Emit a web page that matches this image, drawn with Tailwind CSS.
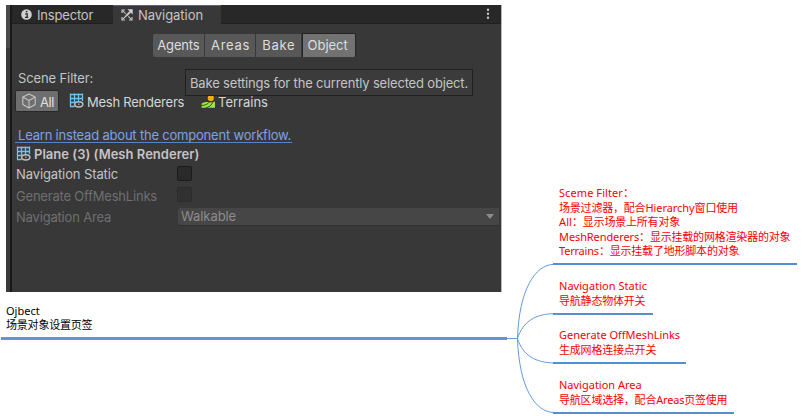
<!DOCTYPE html>
<html lang="zh-CN">
<head>
<meta charset="utf-8">
<title>Navigation – Object</title>
<script src="https://cdn.jsdelivr.net/npm/@tailwindcss/browser@4"></script>
</head>
<body class="bg-white">
<svg width="0" height="0" class="absolute">
  <defs>
    <symbol id="mesh" viewBox="0 0 15 15">
      <path d="M1.5 .5V13.5M5.5 .5V13.5M9.5 .5V8M13.5 .5V8M1 1.5H14M1 5.5H14M1 9.5H7M1 13.5H5.5" fill="none" stroke="#6cc4f0" stroke-width="1.3"/>
      <path d="M3.8 11.3Q9.6 4.6 15 11.3Q9.6 18 3.8 11.3Z" fill="#383838"/>
      <ellipse cx="9.8" cy="11.3" rx="4.1" ry="2.6" fill="none" stroke="#bdbdbd" stroke-width="1.5"/>
      <circle cx="9.8" cy="11.3" r="1" fill="#8a8a8a"/>
    </symbol>
  </defs>
</svg>
<main class="relative w-[803px] h-[418px] overflow-hidden">

  <!-- Root topic -->
  <section class="absolute left-[1px] top-[5px] w-[506px] h-[335px] border-b-[3px] border-[#5f96d9] pl-[5px]">
    <div class="relative w-[496px] h-[287px] flex bg-[#383838] border-r border-[#b8b8b8] font-['Inter',sans-serif] text-[13px] leading-[16px] tracking-[-0.18px] text-[#c4c4c4] whitespace-nowrap">
      <div class="w-[4px] bg-[#4a4a4a] border-b-[244px] border-[#3a3a3a]"></div>
      <div class="w-[2px] bg-[#191919]"></div>
      <div class="flex-1 min-w-0">
        <div class="h-[19px] flex bg-[#282828] border-b border-[#202020]">
          <div class="w-[101px] flex items-center pl-[9px] pt-[2px]">
            <svg class="w-[11px] h-[11px] mr-[5px] -mt-px" viewBox="0 0 11 11"><circle cx="5.5" cy="5.5" r="5.3" fill="#d0d0d0"/><path d="M4.2 4.8H6.2V8M4 8.3H7.3" fill="none" stroke="#282828" stroke-width="1.3"/><circle cx="5.6" cy="2.6" r=".9" fill="#282828"/></svg>
            <span>Inspector</span>
          </div>
          <div class="w-[108px] h-[19px] flex items-center pl-[8px] bg-[#383838] border-t border-[#2f6db5]">
            <svg class="w-[12px] h-[12px] mr-[5px]" viewBox="0 0 12 12" fill="none" stroke="#c4c4c4" stroke-width="1.2"><path d="M1 4V1H4M8 11H11V8M4 11H1V8"/><path d="M1.2 1.2L4.6 4.6M7.3 7.3L10.8 10.8M1.2 10.8L5 7" stroke-width="1.1"/><path d="M5 7L9.3 2.7" stroke-width="2"/><path d="M6.5 .3H11.7V5.5Z" fill="#d4d4d4" stroke="none"/></svg>
            <span class="tracking-[-0.05px]">Navigation</span>
          </div>
          <div class="flex-1"></div>
          <svg class="w-[4px] h-[12px] mt-[3px] mr-[11px]" viewBox="0 0 4 12" fill="#c4c4c4"><circle cx="2" cy="1.8" r="1.2"/><circle cx="2" cy="5.8" r="1.2"/><circle cx="2" cy="9.8" r="1.2"/></svg>
        </div>
        <div class="flex mt-[9px] ml-[140px] w-[204px] h-[25px] gap-[1px] pt-[1px] pb-[1px] pl-[1px] text-[#dedede]">
          <div class="w-[51px] flex items-center justify-center bg-[#585858] rounded-l-[2px] pb-px">Agents</div>
          <div class="w-[51px] flex items-center justify-center bg-[#585858] tracking-[0.75px] pl-[1px] pb-px">Areas</div>
          <div class="w-[45px] flex items-center justify-center bg-[#585858] tracking-[0.7px] pb-px">Bake</div>
          <div class="w-[54px] -mt-px pr-[3px] flex items-center justify-center bg-[#727272] border-t border-l border-r border-[#232323] rounded-r-[2px] tracking-[-0.05px] pb-px">Object</div>
        </div>
        <div class="mt-[12px] ml-[6px] h-[17px] tracking-[-0.12px]">Scene Filter:</div>
        <div class="flex items-center h-[22px] mt-[3px] ml-[3px]">
          <div class="w-[44px] h-[22px] flex items-center pl-[6px] bg-[#6e6e6e] border border-[#282828] rounded-[2px] text-[#e0e0e0] tracking-[-0.4px]">
            <svg class="w-[14px] h-[16px] mr-[4px]" viewBox="0 0 14 16" fill="none" stroke="#c4c4c4" stroke-width="1.1" stroke-linejoin="round"><path d="M7 1L13.2 4V11.5L7 15L.8 11.5V4ZM.8 4L7 7.4L13.2 4M7 7.4V15"/></svg>
            <span class="mt-px">All</span>
          </div>
          <svg class="w-[15px] h-[15px] ml-[10px] mr-[3px] -mt-[1px]"><use href="#mesh"/></svg>
          <span class="w-[113px] text-[#d6d6d6] tracking-[-0.24px] mt-px">Mesh Renderers</span>
          <svg class="w-[15px] h-[14px] mr-[2px] ml-[1px] mt-[2px]" viewBox="0 0 15 14"><circle cx="9.8" cy="3" r="3.1" fill="#f9ab0b"/><path d="M.6 8.6Q3 6.4 7.5 7.1Q10.5 8 14 6.4V12.8H.6Z" fill="#9be83c"/><path d="M.4 10.6Q6.5 10 8.5 6.9M4.8 13Q10 11.8 12 7.2" fill="none" stroke="#383838" stroke-width=".9"/></svg>
          <span class="text-[#d6d6d6] tracking-[0] mt-px">Terrains</span>
        </div>
        <div class="mt-[14px] ml-[3px] w-[277px] h-[17px] pl-[3px] border-b border-[#5883c8] text-[#7ba3e6] tracking-[-0.2px] leading-[18px]">Learn instead about the component workflow.</div>
        <div class="mt-[2px] ml-[4px] h-[18px] flex items-start">
          <svg class="w-[15px] h-[15px] mr-[3px] mt-px"><use href="#mesh"/></svg>
          <span class="font-semibold tracking-[0.02px] mt-px">Plane (3) (Mesh Renderer)</span>
        </div>
        <div class="ml-[4px] mt-px h-[21px] flex">
          <span class="w-[161px] pt-[2px] tracking-[-0.11px]">Navigation Static</span>
          <i class="w-[15px] h-[15px] mt-[2px] bg-[#2a2a2a] border border-[#1b1b1b] rounded-[2px]"></i>
        </div>
        <div class="ml-[4px] h-[21px] flex text-[#6f6f6f]">
          <span class="w-[161px] pt-[3px] tracking-[-0.2px]">Generate OffMeshLinks</span>
          <i class="w-[15px] h-[15px] mt-[2px] bg-[#313131] border border-[#2b2b2b] rounded-[2px]"></i>
        </div>
        <div class="ml-[4px] h-[21px] flex text-[#6f6f6f]">
          <span class="w-[162px] pt-[3px]">Navigation Area</span>
          <div class="w-[321px] h-[18px] mt-[2px] flex items-center pl-[3px] pr-[5px] bg-[#464646] border-b border-[#303030] rounded-[2px] text-[#8d8d8d]">
            <span class="flex-1 tracking-[-0.08px] -mt-px">Walkable</span>
            <svg class="w-[8px] h-[5px]" viewBox="0 0 8 5"><path d="M0 0H8L4 5Z" fill="#8b8b8b"/></svg>
          </div>
        </div>
      </div>
      <div class="absolute left-[179px] top-[64px] w-[288px] h-[27px] flex items-center pl-[4px] bg-[#3b3b3b] border border-[#1f1f1f] tracking-[-0.17px]">Bake settings for the currently selected object.</div>
    </div>
    <div class="mt-[12px] font-['Noto_Sans','Noto_Sans_CJK_SC',sans-serif] text-[11px] leading-[14px] text-black">
      <p>Ojbect</p>
      <p class="tracking-[-0.2px]">场景对象设置页签</p>
    </div>
  </section>

  <!-- Connectors -->
  <svg class="absolute left-[507px] top-[255px]" width="47" height="163" viewBox="507 255 47 163" fill="none" stroke="#6699d9" stroke-width="1">
    <path d="M507 338.5H517.5"/>
    <path d="M517.5 338.5C519 290 535 264.5 554 264.3"/>
    <path d="M517.5 338.5C523 321 536 314 554 313.6"/>
    <path d="M517.5 338.5C523 356 536 362.6 554 363"/>
    <path d="M517.5 338.5C519 387 535 412.3 554 412.5"/>
  </svg>

  <!-- Child topics -->
  <div class="font-['Noto_Sans','Noto_Sans_CJK_SC',sans-serif] text-[11px] leading-[14.5px] text-[#ff0000] whitespace-nowrap">
    <div class="absolute left-[553px] top-[186px] w-[244px] h-[79px] pl-[6px] border-b-2 border-[#558ed5]">
      <p class="tracking-[0.08px]">Sceme Filter<span class="tracking-[-0.2px]">：</span></p>
      <p class="tracking-[-0.2px]">场景过滤器，配合<span class="tracking-[-0.06px]">Hierarchy</span>窗口使用</p>
      <p class="tracking-[-0.2px]"><span class="tracking-[0.1px]">All</span>：显示场景上所有对象</p>
      <p class="tracking-[-0.2px]"><span class="tracking-[-0.1px]">MeshRenderers</span>：显示挂载的网格渲染器的对象</p>
      <p class="tracking-[-0.2px]">Terrains：显示挂载了地形脚本的对象</p>
    </div>
    <div class="absolute left-[553px] top-[279px] w-[100px] h-[36px] pl-[6px] border-b-2 border-[#558ed5]">
      <p class="tracking-[0.04px]">Navigation Static</p>
      <p class="tracking-[-0.2px]">导航静态物体开关</p>
    </div>
    <div class="absolute left-[553px] top-[328px] w-[133px] h-[36px] pl-[6px] border-b-2 border-[#558ed5]">
      <p class="tracking-[-0.03px]">Generate OffMeshLinks</p>
      <p class="tracking-[-0.2px]">生成网格连接点开关</p>
    </div>
    <div class="absolute left-[553px] top-[378px] w-[181px] h-[36px] pl-[6px] border-b-2 border-[#558ed5]">
      <p>Navigation Area</p>
      <p class="tracking-[-0.2px]">导航区域选择，配合Areas页签使用</p>
    </div>
  </div>
</main>
</body>
</html>
